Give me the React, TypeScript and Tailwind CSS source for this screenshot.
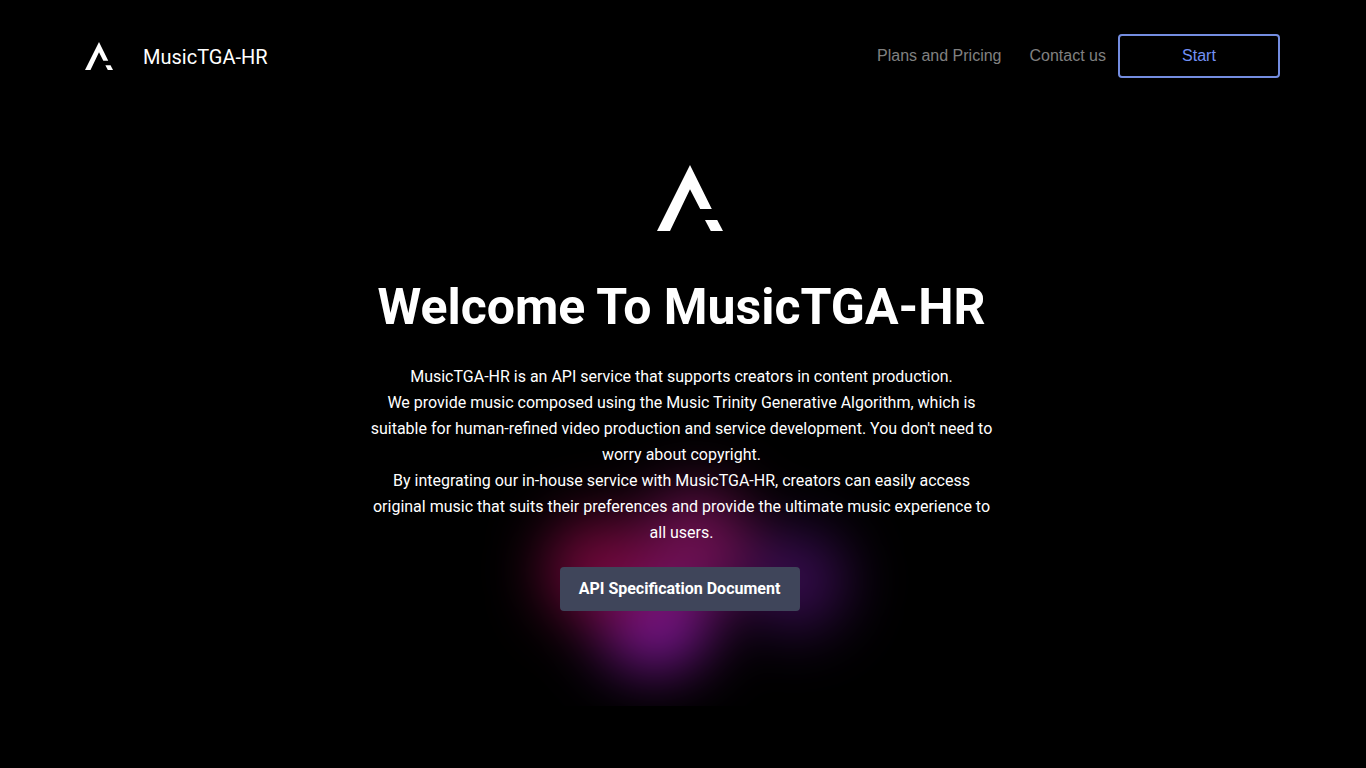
function Logo({ className }: { className?: string }) {
  return (
    <svg viewBox="0 0 66 66" fill="currentColor" className={className} aria-hidden="true">
      <path d="M33 0 L54.8 44 H43.2 L33 24.3 L13 66 H0 Z" />
      <path d="M48 55 H60.2 L66 66 H53.8 Z" />
    </svg>
  )
}

function Glow() {
  return (
    <svg
      viewBox="0 0 480 270"
      className="absolute bottom-[-95px] left-1/2 -z-10 w-[480px] -translate-x-1/2"
      aria-hidden="true"
    >
      <defs>
        <filter id="glow-blur" x="-100%" y="-100%" width="300%" height="300%" colorInterpolationFilters="sRGB">
          <feGaussianBlur stdDeviation="30" />
        </filter>
      </defs>
      <g filter="url(#glow-blur)">
        <circle cx="212" cy="176" r="60" fill="#781690" />
        <circle cx="352" cy="144" r="52" fill="#360c4e" />
        <circle cx="252" cy="108" r="56" fill="#6c1050" />
        <circle cx="156" cy="134" r="54" fill="#70083a" />
      </g>
    </svg>
  )
}

function Header() {
  return (
    <header className="flex items-center justify-between">
      <a href="#" className="flex items-center gap-[30px] text-xl">
        <Logo className="size-7" />
        <span className="pt-px">MusicTGA-HR</span>
      </a>
      <nav className="flex items-center font-['Liberation_Sans',sans-serif] text-base">
        <a href="#" className="mr-7 text-[#808080]">Plans and Pricing</a>
        <a href="#" className="mr-3 text-[#808080]">Contact us</a>
        <button className="h-11 w-[162px] rounded-sm border-2 border-[#748de0] text-[#7391f5]">Start</button>
      </nav>
    </header>
  )
}

function Hero() {
  return (
    <main className="relative isolate mx-auto mt-[87px] flex max-w-[630px] flex-col items-center pr-[2px] text-center">
      <Glow />
      <Logo className="ml-4 size-[66px]" />
      <h1 className="mt-[46px] text-[50px] leading-[60px] font-bold whitespace-nowrap">Welcome To MusicTGA-HR</h1>
      <p className="mt-[27px] text-base leading-[26px]">
        MusicTGA-HR is an API service that supports creators in content production.
        <br />
        We provide music composed using the Music Trinity Generative Algorithm, which is suitable for human-refined
        video production and service development. You don't need to worry about copyright.
        <br />
        By integrating our in-house service with MusicTGA-HR, creators can easily access original music that suits
        their preferences and provide the ultimate music experience to all users.
      </p>
      <button className="mt-[21px] mr-1 h-11 w-60 rounded-sm bg-[#3f455a] text-base font-bold">
        API Specification Document
      </button>
    </main>
  )
}

export default function App() {
  return (
    <div className="min-h-screen bg-black pt-[34px] pr-[86px] pl-[85px] font-[Roboto,sans-serif] text-white">
      <Header />
      <Hero />
    </div>
  )
}
